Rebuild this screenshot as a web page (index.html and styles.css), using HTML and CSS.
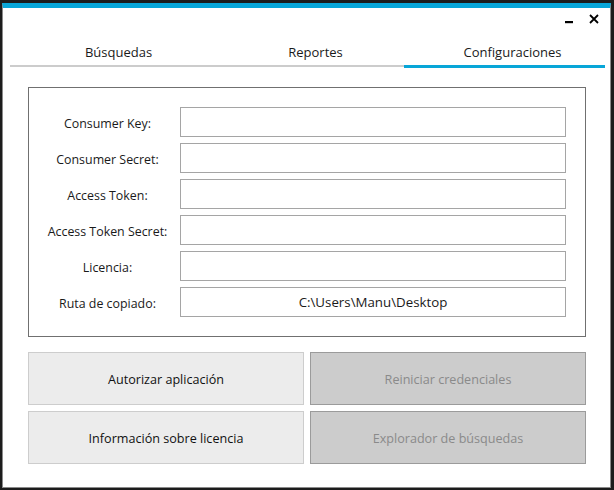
FILE: index.html
```html
<!DOCTYPE html>
<html lang="es">
<head>
<meta charset="utf-8">
<title>Configuraciones</title>
<link rel="stylesheet" href="styles.css">
</head>
<body>
<div class="window">
  <div class="titlebar">
    <svg class="ctl min" width="8" height="10" viewBox="0 0 8 10"><rect x="0" y="7" width="8" height="2.2" fill="#000"/></svg>
    <svg class="ctl close" width="10" height="10" viewBox="0 0 10 10"><path d="M1 1 L9 9 M9 1 L1 9" stroke="#000" stroke-width="1.8" fill="none"/></svg>
  </div>
  <div class="tabs">
    <div class="tab">Búsquedas</div>
    <div class="tab">Reportes</div>
    <div class="tab">Configuraciones</div>
  </div>
  <div class="tabline"><div class="tabline-gray"></div><div class="tabline-blue"></div></div>

  <div class="group">
    <label class="lbl">Consumer Key:</label><div class="field"></div>
    <label class="lbl">Consumer Secret:</label><div class="field"></div>
    <label class="lbl">Access Token:</label><div class="field"></div>
    <label class="lbl">Access Token Secret:</label><div class="field"></div>
    <label class="lbl">Licencia:</label><div class="field"></div>
    <label class="lbl">Ruta de copiado:</label><div class="field">C:\Users\Manu\Desktop</div>
  </div>

  <div class="buttons">
    <div class="btn">Autorizar aplicación</div>
    <div class="btn disabled">Reiniciar credenciales</div>
    <div class="btn">Información sobre licencia</div>
    <div class="btn disabled">Explorador de búsquedas</div>
  </div>
</div>
</body>
</html>
```
FILE: styles.css
```css
html, body {
  margin: 0;
  padding: 0;
}
body {
  background: #1c1c1c;
  width: 614px;
  height: 490px;
  padding: 3px 0 0 2px;
  box-sizing: border-box;
  font-family: "Open Sans", "Noto Sans", sans-serif;
  font-size: 12.4px;
  color: #1a1a1a;
}
.window {
  width: 609px;
  height: 485px;
  box-sizing: border-box;
  background: #fff;
  border: 1px solid #8a8a8a;
  border-top: 5px solid #08a6d8;
}
.titlebar {
  height: 20px;
  box-sizing: border-box;
  padding: 6px 11px 0 0;
  display: flex;
  justify-content: flex-end;
  align-items: flex-start;
  gap: 16px;
}
.ctl { display: block; }
.tabs {
  display: grid;
  grid-template-columns: 197px 197px 197px;
  margin: 15px 0 0 17px;
  line-height: 18px;
  height: 18px;
  font-size: 13px;
}
.tab {
  text-align: center;
  white-space: nowrap;
}
.tabline {
  display: flex;
  align-items: flex-start;
  margin: 4px 5px 0 7px;
  height: 3px;
}
.tabline-gray {
  flex: 1;
  height: 2px;
  background: #cccccc;
}
.tabline-blue {
  width: 201px;
  height: 3px;
  background: #08a6d8;
}
.group {
  margin: 19px 0 0 25px;
  width: 558px;
  height: 250px;
  box-sizing: border-box;
  border: 1px solid #707070;
  padding: 19px 0 0 11px;
  display: grid;
  grid-template-columns: 135px 386px;
  grid-auto-rows: 30px;
  column-gap: 5px;
  row-gap: 6px;
}
.lbl {
  display: flex;
  align-items: center;
  justify-content: center;
  padding-top: 3px;
  box-sizing: border-box;
  white-space: nowrap;
}
.field {
  border: 1px solid #a5a5a5;
  box-sizing: border-box;
  display: flex;
  align-items: center;
  justify-content: center;
  font-size: 13.3px;
}
.buttons {
  margin: 15px 0 0 25px;
  width: 558px;
  display: grid;
  grid-template-columns: 276px 276px;
  grid-template-rows: 53px 53px;
  gap: 6px;
}
.btn {
  box-sizing: border-box;
  background: #ececec;
  border: 1px solid #cdcdcd;
  display: flex;
  align-items: center;
  justify-content: center;
  padding-top: 1px;
  font-size: 12.6px;
  color: #111;
}
.btn.disabled {
  background: #cccccc;
  border-color: #9b9b9b;
  color: #8a8a8a;
}
```
